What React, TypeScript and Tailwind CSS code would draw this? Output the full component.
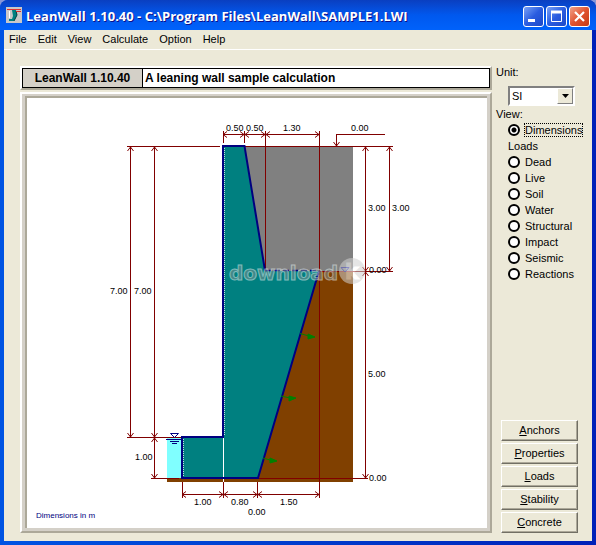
import { useState } from "react";

const MENU = ["File", "Edit", "View", "Calculate", "Option", "Help"];
const LOADS = ["Dead", "Live", "Soil", "Water", "Structural", "Impact", "Seismic", "Reactions"];
const ACTIONS = ["Anchors", "Properties", "Loads", "Stability", "Concrete"];

type Dir = "up" | "down" | "left" | "right";

// open arrow head with its tip on x, y
function Head({ x, y, dir }: { x: number; y: number; dir: Dir }) {
  const d = {
    up: `M${x - 3} ${y + 4}L${x} ${y}L${x + 3} ${y + 4}`,
    down: `M${x - 3} ${y - 4}L${x} ${y}L${x + 3} ${y - 4}`,
    left: `M${x + 4} ${y - 3}L${x} ${y}L${x + 4} ${y + 3}`,
    right: `M${x - 4} ${y - 3}L${x} ${y}L${x - 4} ${y + 3}`,
  };
  return <path d={d[dir]} />;
}

function VDim({ x, y1, y2 }: { x: number; y1: number; y2: number }) {
  return (
    <g>
      <path d={`M${x} ${y1}V${y2}`} />
      <Head x={x} y={y1} dir="up" />
      <Head x={x} y={y2} dir="down" />
    </g>
  );
}

function HDim({ y, x1, x2 }: { y: number; x1: number; x2: number }) {
  return (
    <g>
      <path d={`M${x1} ${y}H${x2}`} />
      <Head x={x1} y={y} dir="left" />
      <Head x={x2} y={y} dir="right" />
    </g>
  );
}

const LABELS: [number, number, string][] = [
  [226, 131, "0.50"],
  [246, 131, "0.50"],
  [283, 131, "1.30"],
  [351, 131, "0.00"],
  [368, 211, "3.00"],
  [392, 211, "3.00"],
  [369, 273, "0.00"],
  [368, 377, "5.00"],
  [369, 481, "0.00"],
  [110, 294, "7.00"],
  [134, 294, "7.00"],
  [135, 460, "1.00"],
  [194, 505, "1.00"],
  [231, 505, "0.80"],
  [280, 505, "1.50"],
  [248, 515, "0.00"],
];

function WallDrawing() {
  return (
    <svg viewBox="27 98 460 430" className="block h-auto w-full bg-white" role="img" aria-label="Wall section">
      <g shapeRendering="crispEdges">
        <rect x="244" y="147" width="109" height="124" fill="#808080" />
        <rect x="258" y="271" width="95" height="211" fill="#804000" />
        <rect x="167" y="478" width="186" height="4" fill="#804000" />
        <rect x="167" y="438" width="15" height="40" fill="#80ffff" />
      </g>
      <path d="M223 146H244L265 271H319L258 478H182V437H223Z" fill="#008080" />

      <g fill="none" stroke="#800000" shapeRendering="crispEdges">
        <path d="M127 146.5H220M244 146.5H393M127 437.5H182M151 478.5H179M258 478.5H368M319 271.5H393" />
        <path d="M223.5 131V143M244.5 131V143M265.5 131V270M319.5 131V498" />
        <path d="M182.5 482V498M223.5 482V498M257.5 482V498" />
        <path d="M385 134.5H336.5V146" />
      </g>
      <g fill="none" stroke="#800000">
        <VDim x={130.5} y1={147} y2={437} />
        <VDim x={154.5} y1={147} y2={437} />
        <VDim x={154.5} y1={438} y2={478} />
        <VDim x={365.5} y1={147} y2={271} />
        <VDim x={365.5} y1={272} y2={478} />
        <VDim x={389.5} y1={147} y2={271} />
        <HDim y={134.5} x1={223} x2={244} />
        <HDim y={134.5} x1={245} x2={265} />
        <HDim y={134.5} x1={266} x2={319} />
        <HDim y={494.5} x1={182} x2={223} />
        <HDim y={494.5} x1={224} x2={257} />
        <HDim y={494.5} x1={258} x2={319} />
        <Head x={336.5} y={146} dir="down" />
      </g>

      <path d="M223.5 438V482" stroke="#fff" shapeRendering="crispEdges" />
      <path d="M224.5 148V436M183.5 439V477" stroke="#c0dcdc" strokeDasharray="1 1" shapeRendering="crispEdges" />
      <path d="M265 270.5L244.5 146H223V437H182V478H258L319 271" fill="none" stroke="#000080" strokeWidth="2" />
      <path d="M265 270.5H319" stroke="#000080" strokeWidth="1.5" strokeDasharray="6 3" />

      {/* water levels */}
      <g fill="none" stroke="#000080">
        <path d="M170.5 433.5H178.5L174.5 437.5Z" fill="#fff" />
        <path d="M166 439.5H182M170 441.5H179M172 443.5H177" />
        <path d="M341 267.5H349L345 272Z" />
      </g>

      {/* soil pressure arrows */}
      <g stroke="#008000" fill="#008000">
        <path d="M300 333.5L309 336M308 334L315 337L308 339Z" />
        <path d="M281 396L290 398M289 396L296 398L289 401Z" />
        <path d="M263 458L270 460M270 458L277 461L270 463Z" />
      </g>

      {/* watermark */}
      <g opacity="0.55">
        <circle cx="352" cy="271" r="13" fill="#d0d0d0" />
        <text x="229" y="280" className="font-['DejaVu_Sans',sans-serif] text-[20px] font-bold" fill="#7f8f8f" stroke="#e4eded" strokeWidth="1">
          download
        </text>
        <text x="345" y="279" className="font-['DejaVu_Sans',sans-serif] text-[21px] font-bold" fill="#fff" stroke="#fff">
          k
        </text>
      </g>

      <g className="font-['Liberation_Sans',sans-serif] text-[9px]" fill="#000">
        {LABELS.map(([x, y, text]) => (
          <text key={`${x}-${y}`} x={x} y={y}>
            {text}
          </text>
        ))}
      </g>
      <text x="36" y="518" className="font-['Liberation_Sans',sans-serif] text-[8px]" fill="#000080">
        Dimensions in m
      </text>
    </svg>
  );
}

function AppIcon() {
  return (
    <svg viewBox="0 0 16 16" className="h-4 w-4 shrink-0" aria-hidden="true">
      <rect width="16" height="16" fill="#c8c8c8" />
      <path d="M6 3H10L11 8L8 14H3V12H6L7 9Z" fill="#008080" />
      <path d="M10 4L11 8L8 14" fill="none" stroke="#004040" />
      <path d="M1 2.5H15M10 4.5H15" stroke="#e03030" />
      <path d="M3.5 4V11" stroke="#fff" />
    </svg>
  );
}

export default function App() {
  const [unit, setUnit] = useState("SI");
  const [view, setView] = useState("Dimensions");

  const radio = (name: string) => (
    <label key={name} className="flex h-4 items-center gap-1">
      <input
        type="radio"
        name="view"
        checked={view === name}
        onChange={() => setView(name)}
        className="h-3 w-3 shrink-0 appearance-none rounded-full border-2 border-black bg-white checked:bg-[radial-gradient(circle,#000_2px,#fff_3px)]"
      />
      <span className={`border border-dotted leading-3 ${view === name ? "border-black" : "border-transparent"}`}>{name}</span>
    </label>
  );

  return (
    <div className="min-h-screen bg-[#8796d8] font-['Liberation_Sans',sans-serif] text-[11px] text-black">
      <div className="flex min-h-screen flex-col rounded-t-lg bg-[#0831d9] bg-linear-to-r from-[#0054e3] to-[#0020b8] px-1 pb-1">
        <header className="-mx-1 flex h-[30px] items-center gap-1 rounded-t-lg bg-linear-to-b from-[#0a3fc0] via-[#0058ee] to-[#0062fb] px-1.5">
          <AppIcon />
          <h1 className="mt-1 flex-1 truncate font-['Open_Sans',sans-serif] text-[13px] font-bold text-white [text-shadow:1px_1px_#0f1089]">
            LeanWall 1.10.40 - C:\Program Files\LeanWall\SAMPLE1.LWI
          </h1>
          <div className="mt-0.5 flex gap-0.5">
            <button aria-label="Minimize" className="h-[21px] w-[21px] rounded-[3px] border border-white bg-linear-to-br from-[#7aa0f5] via-[#2a5ce0] to-[#1c48c8]">
              <svg viewBox="0 0 19 19" className="block">
                <path d="M4 13.5H11" stroke="#fff" strokeWidth="3" />
              </svg>
            </button>
            <button aria-label="Maximize" className="h-[21px] w-[21px] rounded-[3px] border border-white bg-linear-to-br from-[#7aa0f5] via-[#2a5ce0] to-[#1c48c8]">
              <svg viewBox="0 0 19 19" className="block">
                <path d="M4.5 4.5H14.5V14.5H4.5Z" fill="none" stroke="#fff" />
                <path d="M4 5H15" stroke="#fff" strokeWidth="3" />
              </svg>
            </button>
            <button aria-label="Close" className="h-[21px] w-[21px] rounded-[3px] border border-white bg-linear-to-br from-[#f0a088] via-[#e0532f] to-[#c63a12]">
              <svg viewBox="0 0 19 19" className="block">
                <path d="M5 5L14 14M14 5L5 14" stroke="#fff" strokeWidth="2.2" />
              </svg>
            </button>
          </div>
        </header>

        <div className="flex flex-1 flex-col bg-[#ece9d8]">
          <nav className="flex h-5 items-center gap-[11px] border-b border-white pl-[5px]">
            {MENU.map((item) => (
              <button key={item}>{item}</button>
            ))}
          </nav>

          <main className="flex flex-1 gap-1 pt-4 pb-2 pl-4">
            <div className="flex min-w-0 flex-1 flex-col gap-0.5">
              <div className="border-2 border-t-white border-r-[#aca899] border-b-[#aca899] border-l-white">
                <div className="flex h-5 border border-black bg-white text-[12px] leading-[18px] font-bold">
                  <div className="w-[120px] border-r border-black bg-[#d4d0c8] text-center">LeanWall 1.10.40</div>
                  <div className="px-0.5">A leaning wall sample calculation</div>
                </div>
              </div>
              <div className="border-2 border-t-white border-r-[#aca899] border-b-[#aca899] border-l-white bg-[#d4d0c8] pt-0.5 pr-[3px] pb-[3px] pl-[3px]">
                <div className="border-t-2 border-l-2 border-[#aca899]">
                  <WallDrawing />
                </div>
              </div>
            </div>

            <aside className="flex w-24 shrink-0 flex-col justify-between">
              <div>
                <label htmlFor="unit" className="block leading-3">
                  Unit:
                </label>
                <div className="relative mt-2 ml-3 w-[67px]">
                  <select
                    id="unit"
                    value={unit}
                    onChange={(e) => setUnit(e.target.value)}
                    className="block h-5 w-full appearance-none border-2 border-t-[#808080] border-r-white border-b-white border-l-[#808080] bg-white pl-0.5"
                  >
                    <option>SI</option>
                    <option>US</option>
                  </select>
                  <span className="pointer-events-none absolute top-0.5 right-0.5 flex h-4 w-4 items-center justify-center border border-t-white border-r-[#808080] border-b-[#808080] border-l-white bg-[#ece9d8]">
                    <svg viewBox="0 0 7 4" className="h-1 w-[7px]">
                      <path d="M0 0H7L3.5 4Z" />
                    </svg>
                  </span>
                </div>
                <fieldset>
                  <legend className="leading-4">View:</legend>
                  <div className="pl-3">
                    {radio("Dimensions")}
                    <div className="leading-4">Loads</div>
                    {LOADS.map(radio)}
                  </div>
                </fieldset>
              </div>

              <div className="flex flex-col gap-0.5 pr-3.5 pl-[5px]">
                {ACTIONS.map((name) => (
                  <button
                    key={name}
                    className="h-[21px] border border-t-white border-r-[#716f64] border-b-[#716f64] border-l-white shadow-[inset_-1px_-1px_#aca899]"
                  >
                    <span className="underline">{name[0]}</span>
                    {name.slice(1)}
                  </button>
                ))}
              </div>
            </aside>
          </main>
        </div>
      </div>
    </div>
  );
}
